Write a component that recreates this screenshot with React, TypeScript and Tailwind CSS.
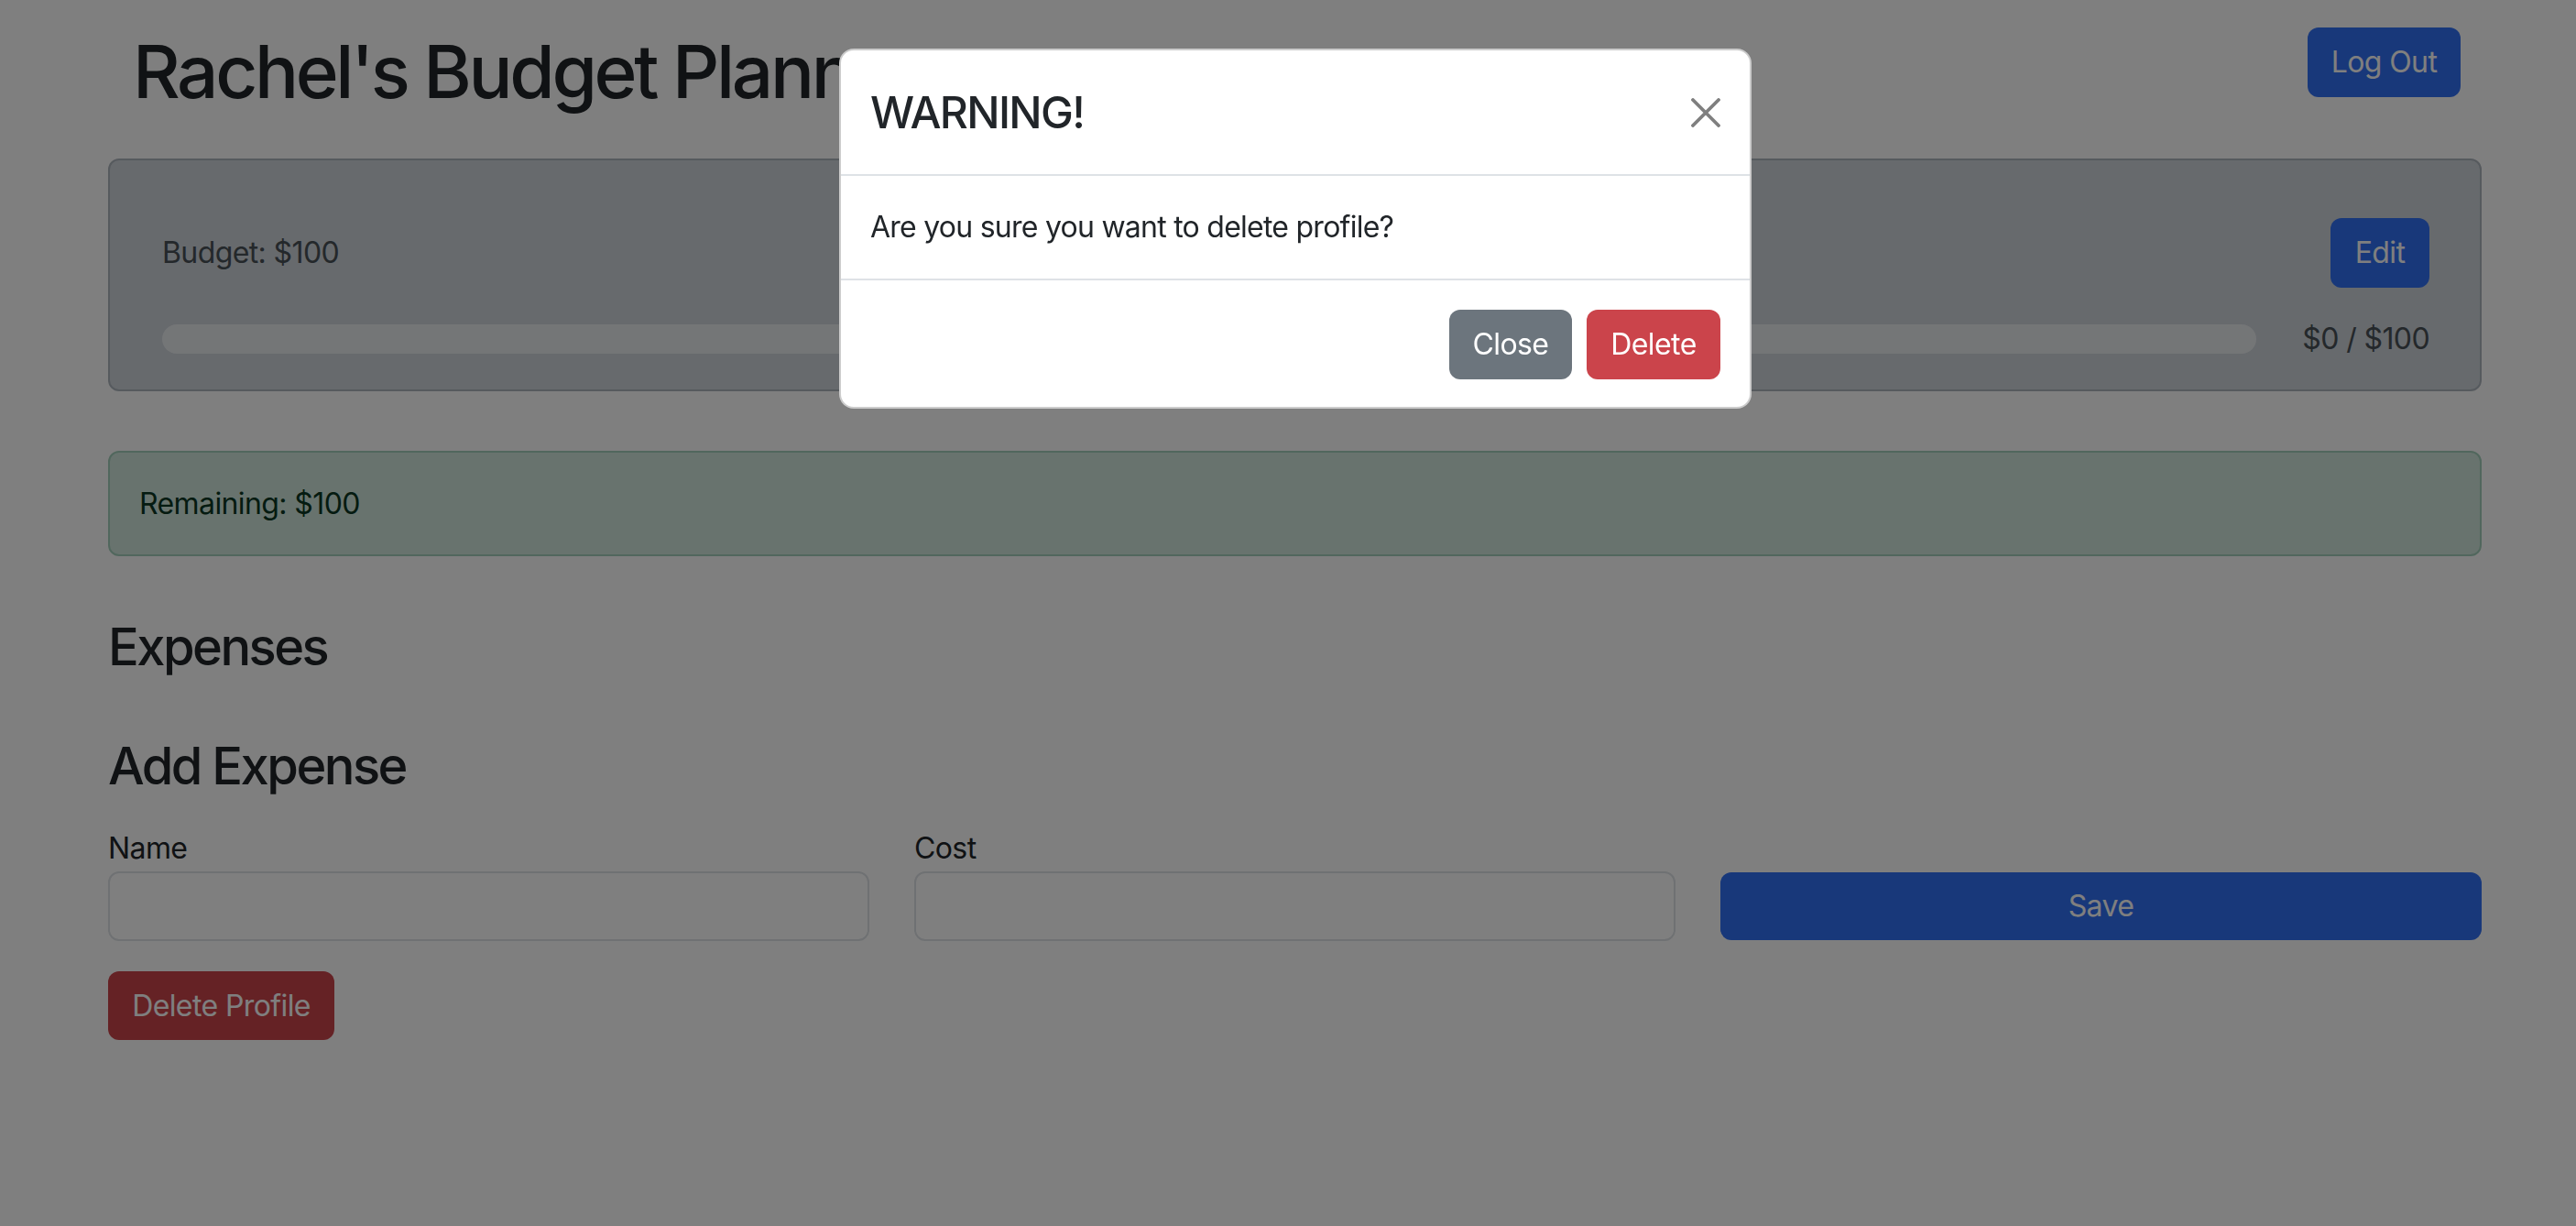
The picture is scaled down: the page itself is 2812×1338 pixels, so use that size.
import { useState } from 'react'

function CloseIcon() {
  return (
    <svg viewBox="0 0 16 16" className="h-[32px] w-[32px]" fill="none">
      <path d="M1 1L15 15M15 1L1 15" stroke="#000" strokeOpacity="0.5" strokeWidth="1.9" strokeLinecap="round" />
    </svg>
  )
}

function BudgetCard() {
  return (
    <div className="mt-[47px] rounded-[12px] border-2 border-[#adb5bd] bg-[#ced4da] pt-[63px] pr-[55px] pb-[31px] pl-[57px] text-[#495057]">
      <div className="flex h-[76px] items-center justify-between">
        <span className="text-[32px] leading-[48px]">Budget: $100</span>
        <button className="h-[76px] w-[108px] rounded-[12px] bg-[#3170f4] text-[32px] text-white">Edit</button>
      </div>
      <div className="mt-[32px] flex items-center gap-[50px]">
        <div className="h-[32px] flex-1 rounded-full bg-[#e9ecef]" />
        <span className="text-[32px] leading-[48px]">$0 / $100</span>
      </div>
    </div>
  )
}

function ExpenseForm() {
  return (
    <div>
      <h3 className="mt-[63px] text-[56px] leading-[67px] font-medium tracking-[-0.045em]">Add Expense</h3>
      <div className="mt-[32px] grid grid-cols-3 items-end gap-x-[49px]">
        <div>
          <label className="block text-[32px] leading-[48px]">Name</label>
          <input className="mt-[1px] block h-[76px] w-full rounded-[12px] border-2 border-[#dee2e6] bg-white px-[24px] text-[32px]" />
        </div>
        <div>
          <label className="block text-[32px] leading-[48px]">Cost</label>
          <input className="mt-[1px] block h-[76px] w-full rounded-[12px] border-2 border-[#dee2e6] bg-white px-[24px] text-[32px]" />
        </div>
        <button className="mb-[1px] h-[74px] w-full rounded-[12px] bg-[#3170f4] text-[32px] text-white">Save</button>
      </div>
    </div>
  )
}

function DeleteModal({ onClose }: { onClose: () => void }) {
  return (
    <div className="fixed inset-0 bg-black/50">
      <div className="mt-[53px] ml-[916px] w-[996px] overflow-hidden rounded-[16px] border-2 border-black/20 bg-white text-[#212529]">
        <div className="flex h-[137px] items-center justify-between border-b-2 border-[#dee2e6] px-[32px]">
          <div className="text-[48px] leading-[58px] font-medium tracking-[-0.035em]">WARNING!</div>
          <button onClick={onClose}>
            <CloseIcon />
          </button>
        </div>
        <div className="flex h-[112px] items-center px-[32px] text-[32px] leading-[48px] tracking-[-0.75px]">
          Are you sure you want to delete profile?
        </div>
        <div className="flex h-[140px] items-center justify-end gap-[16px] border-t-2 border-[#dee2e6] px-[32px] pt-[2px]">
          <button onClick={onClose} className="h-[76px] w-[134px] rounded-[12px] bg-[#6c757d] text-[32px] text-white">
            Close
          </button>
          <button className="h-[76px] w-[146px] rounded-[12px] bg-[#cb444b] text-[32px] text-white">Delete</button>
        </div>
      </div>
    </div>
  )
}

export default function App() {
  const [showModal, setShowModal] = useState(true)

  return (
    <div className="relative min-h-screen w-full bg-white font-['Inter',sans-serif] tracking-[-0.6px] text-[#212529]">
      <div className="ml-[118px] w-[2591px]">
        <header className="flex items-start justify-between pt-[30px]">
          <h1 className="ml-[27px] text-[80px] leading-[96px] font-medium tracking-[-0.042em]">Rachel's Budget Planner</h1>
          <button className="mr-[23px] h-[76px] w-[167px] rounded-[12px] bg-[#3170f4] text-[32px] text-white">
            Log Out
          </button>
        </header>

        <BudgetCard />

        <div className="mt-[65px] rounded-[12px] border-2 border-[#a3cfbb] bg-[#d1e7dd] px-[32px] pt-[32px] pb-[31px] text-[32px] leading-[48px] text-[#0a3622]">
          Remaining: $100
        </div>

        <h3 className="mt-[66px] text-[56px] leading-[67px] font-medium tracking-[-0.045em]">Expenses</h3>

        <ExpenseForm />

        <button
          onClick={() => setShowModal(true)}
          className="mt-[33px] h-[75px] w-[247px] rounded-[12px] bg-[#cb444b] text-[32px] text-white"
        >
          Delete Profile
        </button>
      </div>

      {showModal && <DeleteModal onClose={() => setShowModal(false)} />}
    </div>
  )
}
